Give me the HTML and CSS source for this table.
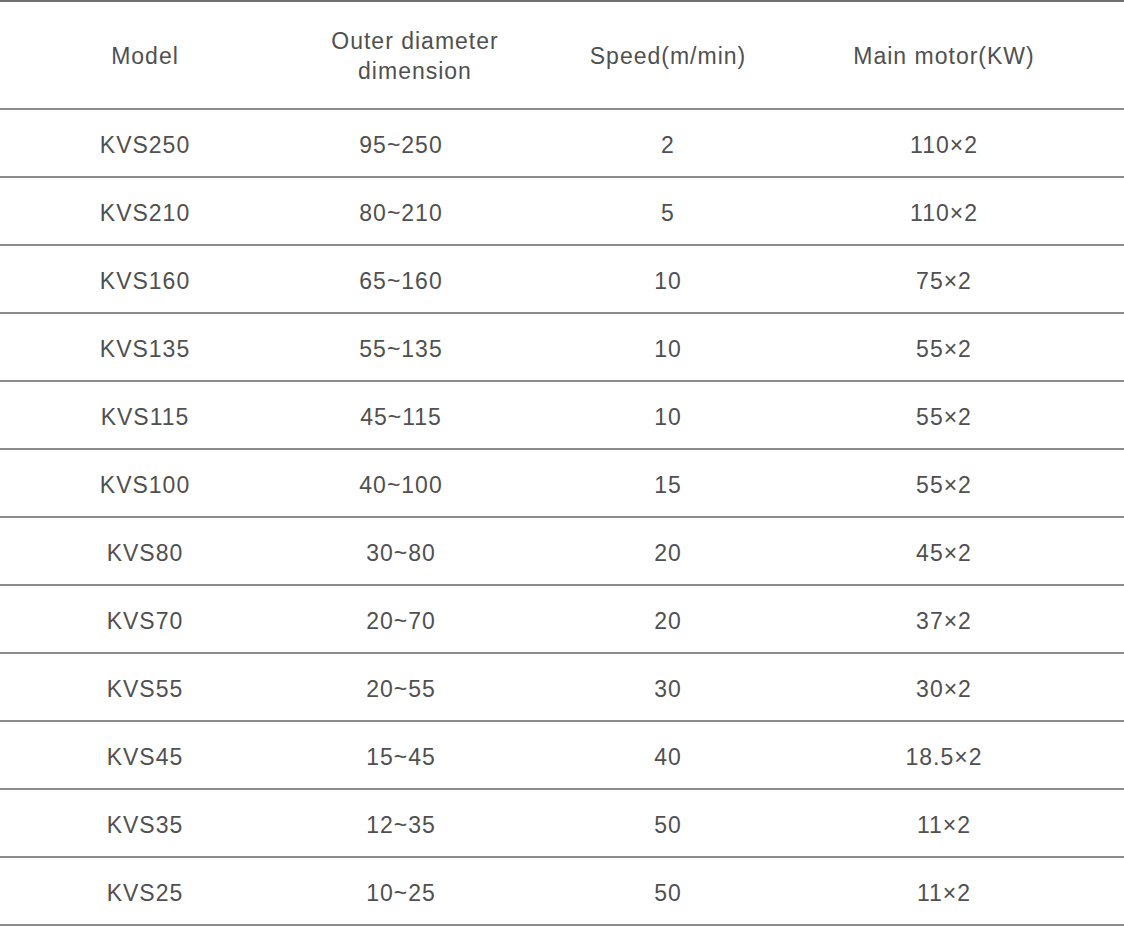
FILE: index.html
```html
<!DOCTYPE html>
<html>
<head>
<meta charset="utf-8">
<link rel="stylesheet" href="styles.css">
</head>
<body>
<table class="spec">
  <colgroup>
    <col class="c1"><col class="c2"><col class="c3"><col class="c4">
  </colgroup>
  <thead>
    <tr><th>Model</th><th class="dia">Outer diameter<br>dimension</th><th>Speed(m/min)</th><th class="last">Main motor(KW)</th></tr>
  </thead>
  <tbody>
    <tr><td>KVS250</td><td>95~250</td><td>2</td><td class="last">110×2</td></tr>
    <tr><td>KVS210</td><td>80~210</td><td>5</td><td class="last">110×2</td></tr>
    <tr><td>KVS160</td><td>65~160</td><td>10</td><td class="last">75×2</td></tr>
    <tr><td>KVS135</td><td>55~135</td><td>10</td><td class="last">55×2</td></tr>
    <tr><td>KVS115</td><td>45~115</td><td>10</td><td class="last">55×2</td></tr>
    <tr><td>KVS100</td><td>40~100</td><td>15</td><td class="last">55×2</td></tr>
    <tr><td>KVS80</td><td>30~80</td><td>20</td><td class="last">45×2</td></tr>
    <tr><td>KVS70</td><td>20~70</td><td>20</td><td class="last">37×2</td></tr>
    <tr><td>KVS55</td><td>20~55</td><td>30</td><td class="last">30×2</td></tr>
    <tr><td>KVS45</td><td>15~45</td><td>40</td><td class="last">18.5×2</td></tr>
    <tr><td>KVS35</td><td>12~35</td><td>50</td><td class="last">11×2</td></tr>
    <tr><td>KVS25</td><td>10~25</td><td>50</td><td class="last">11×2</td></tr>
  </tbody>
</table>
</body>
</html>
```

FILE: styles.css
```css
html, body {
  margin: 0;
  padding: 0;
  background: #fff;
}
.spec {
  width: 1124px;
  border-collapse: collapse;
  table-layout: fixed;
  font-family: "Liberation Sans", Arial, sans-serif;
  font-size: 23px;
  letter-spacing: 1px;
  color: #505050;
  border-top: 2px solid #707070;
}
.c1 { width: 290px; }
.c2 { width: 222px; }
.c3 { width: 312px; }
.c4 { width: 300px; }
.spec th, .spec td {
  text-align: center;
  vertical-align: middle;
  padding: 0;
  font-weight: normal;
  border-bottom: 2px solid #8c8c8c;
}
.spec th {
  height: 104px;
  padding-top: 2px;
  line-height: 30px;
}
.spec td {
  height: 63px;
  padding-top: 3px;
  line-height: 26px;
}
.spec .dia {
  padding-left: 28px;
}
.spec .last {
  padding-right: 60px;
}
```
